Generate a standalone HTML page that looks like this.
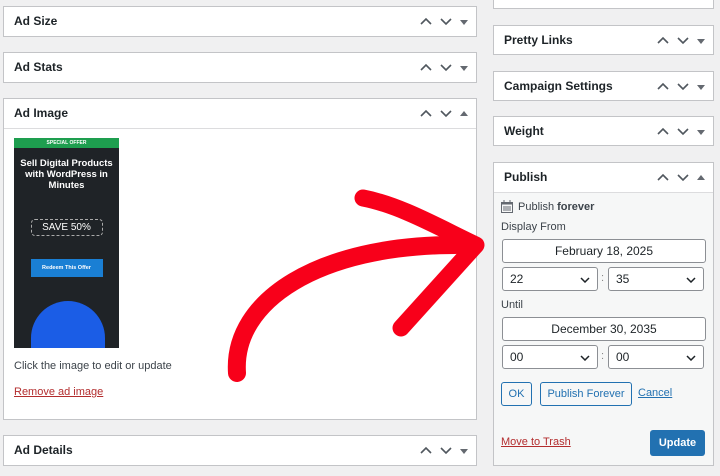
<!DOCTYPE html>
<html><head><style>
*{box-sizing:border-box;margin:0;padding:0}
body{width:720px;height:476px;background:#f0f0f1;font-family:"Liberation Sans",Arial,sans-serif;color:#1d2327;position:relative;overflow:hidden;font-size:11px}
.box{position:absolute;background:#fff;border:1px solid #c3c4c7}
.hd{height:30px;line-height:29px;padding-left:10px;font-weight:bold;font-size:12px;position:relative}
.ctl{position:absolute;right:8px;top:0;height:29px;display:flex;align-items:center;gap:8px}
.ctl svg{display:block}
.a{position:absolute}
.inp{position:absolute;background:#fff;border:1px solid #8c8f94;border-radius:3px;font-size:12px;height:24px;line-height:22px}
.btn{position:absolute;border:1px solid #2271b1;color:#2271b1;border-radius:3px;background:#f6f7f7;height:24px;line-height:22px;text-align:center;font-size:11px}
</style></head><body>
<svg width="0" height="0" style="position:absolute"><defs>
<g id="up"><path d="M1 7 L6 2 L11 7" fill="none" stroke="#50575e" stroke-width="1.6"/></g>
<g id="dn"><path d="M1 2 L6 7 L11 2" fill="none" stroke="#50575e" stroke-width="1.6"/></g>
</defs></svg>

<div class="box" style="left:3px;top:6px;width:474px;height:31px"><div class="hd">Ad Size<div class="ctl"><svg width="12" height="9"><use href="#up"/></svg><svg width="12" height="9"><use href="#dn"/></svg><svg width="8" height="6"><path d="M0 1 L8 1 L4 6Z" fill="#646970"/></svg></div></div></div>
<div class="box" style="left:3px;top:52px;width:474px;height:31px"><div class="hd">Ad Stats<div class="ctl"><svg width="12" height="9"><use href="#up"/></svg><svg width="12" height="9"><use href="#dn"/></svg><svg width="8" height="6"><path d="M0 1 L8 1 L4 6Z" fill="#646970"/></svg></div></div></div>
<div class="box" style="left:3px;top:98px;width:474px;height:322px"><div class="hd" style="border-bottom:1px solid #dcdcde">Ad Image<div class="ctl"><svg width="12" height="9"><use href="#up"/></svg><svg width="12" height="9"><use href="#dn"/></svg><svg width="8" height="6"><path d="M0 5 L8 5 L4 0Z" fill="#646970"/></svg></div></div>
 <div class="a" style="left:10px;top:39px;width:105px;height:210px;background:#1f2327;overflow:hidden">
  <div style="height:10px;background:#1e9e4f;color:#fff;font-size:5px;font-weight:bold;text-align:center;line-height:10px">SPECIAL OFFER</div>
  <div style="color:#fff;font-weight:bold;font-size:9.5px;line-height:11px;text-align:center;margin-top:10px">Sell Digital Products with WordPress in Minutes</div>
  <div style="margin:28px auto 0;width:72px;height:17px;border:1px dashed #aaa;border-radius:4px;color:#fff;font-size:10px;text-align:center;line-height:15px">SAVE 50%</div>
  <div style="margin:23px auto 0;width:72px;height:18px;background:#1a7fd4;color:#fff;font-size:5.5px;font-weight:bold;text-align:center;line-height:18px">Redeem This Offer</div>
  <div style="position:absolute;left:17px;top:163px;width:74px;height:70px;border-radius:37px 37px 10px 10px;background:#1b5de6"></div>
 </div>
 <div class="a" style="left:10px;top:261px;font-size:11px;color:#3c434a">Click the image to edit or update</div>
 <div class="a" style="left:10px;top:287px;font-size:11px;color:#b32d2e;text-decoration:underline">Remove ad image</div>
</div>
<div class="box" style="left:3px;top:435px;width:474px;height:31px"><div class="hd">Ad Details<div class="ctl"><svg width="12" height="9"><use href="#up"/></svg><svg width="12" height="9"><use href="#dn"/></svg><svg width="8" height="6"><path d="M0 1 L8 1 L4 6Z" fill="#646970"/></svg></div></div></div>

<div class="box" style="left:493px;top:-20px;width:221px;height:29px"></div>
<div class="box" style="left:493px;top:25px;width:221px;height:30px"><div class="hd">Pretty Links<div class="ctl"><svg width="12" height="9"><use href="#up"/></svg><svg width="12" height="9"><use href="#dn"/></svg><svg width="8" height="6"><path d="M0 1 L8 1 L4 6Z" fill="#646970"/></svg></div></div></div>
<div class="box" style="left:493px;top:71px;width:221px;height:30px"><div class="hd">Campaign Settings<div class="ctl"><svg width="12" height="9"><use href="#up"/></svg><svg width="12" height="9"><use href="#dn"/></svg><svg width="8" height="6"><path d="M0 1 L8 1 L4 6Z" fill="#646970"/></svg></div></div></div>
<div class="box" style="left:493px;top:116px;width:221px;height:30px"><div class="hd">Weight<div class="ctl"><svg width="12" height="9"><use href="#up"/></svg><svg width="12" height="9"><use href="#dn"/></svg><svg width="8" height="6"><path d="M0 1 L8 1 L4 6Z" fill="#646970"/></svg></div></div></div>
<div class="box" style="left:493px;top:162px;width:221px;height:304px;background:#f6f7f7"><div class="hd" style="background:#fff;border-bottom:1px solid #dcdcde">Publish<div class="ctl"><svg width="12" height="9"><use href="#up"/></svg><svg width="12" height="9"><use href="#dn"/></svg><svg width="8" height="6"><path d="M0 5 L8 5 L4 0Z" fill="#646970"/></svg></div></div></div>

<svg class="a" style="left:501px;top:200px" width="12" height="13"><rect x="0.5" y="2.5" width="11" height="10" fill="none" stroke="#646970"/><rect x="0.5" y="2.5" width="11" height="2" fill="#646970"/><path d="M3 0v3M9 0v3M3 6v5M5 6v5M7 6v5M9 6v5" stroke="#646970"/></svg>
<div class="a" style="left:518px;top:201px;font-size:11px;color:#3c434a">Publish <b>forever</b></div>
<div class="a" style="left:501px;top:221px;font-size:11px;color:#3c434a">Display From</div>
<div class="inp" style="left:502px;top:239px;width:204px;text-align:center">February 18, 2025</div>
<div class="inp" style="left:502px;top:267px;width:96px;padding-left:7px">22<svg style="position:absolute;right:7px;top:9px" width="10" height="6"><path d="M1 1 L5 5 L9 1" fill="none" stroke="#1d2327" stroke-width="1.5"/></svg></div>
<div class="a" style="left:601px;top:272px;color:#888">:</div>
<div class="inp" style="left:608px;top:267px;width:96px;padding-left:7px">35<svg style="position:absolute;right:7px;top:9px" width="10" height="6"><path d="M1 1 L5 5 L9 1" fill="none" stroke="#1d2327" stroke-width="1.5"/></svg></div>
<div class="a" style="left:501px;top:299px;font-size:11px;color:#3c434a">Until</div>
<div class="inp" style="left:502px;top:317px;width:204px;text-align:center">December 30, 2035</div>
<div class="inp" style="left:502px;top:345px;width:96px;padding-left:7px">00<svg style="position:absolute;right:7px;top:9px" width="10" height="6"><path d="M1 1 L5 5 L9 1" fill="none" stroke="#1d2327" stroke-width="1.5"/></svg></div>
<div class="a" style="left:601px;top:350px;color:#888">:</div>
<div class="inp" style="left:608px;top:345px;width:96px;padding-left:7px">00<svg style="position:absolute;right:7px;top:9px" width="10" height="6"><path d="M1 1 L5 5 L9 1" fill="none" stroke="#1d2327" stroke-width="1.5"/></svg></div>
<div class="btn" style="left:501px;top:382px;width:31px">OK</div>
<div class="btn" style="left:540px;top:382px;width:92px">Publish Forever</div>
<div class="a" style="left:638px;top:387px;color:#2271b1;text-decoration:underline">Cancel</div>
<div class="a" style="left:501px;top:436px;color:#b32d2e;text-decoration:underline">Move to Trash</div>
<div class="a" style="left:650px;top:430px;width:55px;height:26px;background:#2271b1;border-radius:3px;color:#fff;font-weight:bold;font-size:11px;text-align:center;line-height:26px">Update</div>

<svg class="a" style="left:0;top:0" width="720" height="476">
<path d="M237 373 C 232 300 320 245 455 245" fill="none" stroke="#f8001a" stroke-width="18" stroke-linecap="round"/>
<path d="M363 198 C 400 205 440 228 476 245 L 401 328" fill="none" stroke="#f8001a" stroke-width="17" stroke-linecap="round" stroke-linejoin="round"/>
</svg>
</body></html>
